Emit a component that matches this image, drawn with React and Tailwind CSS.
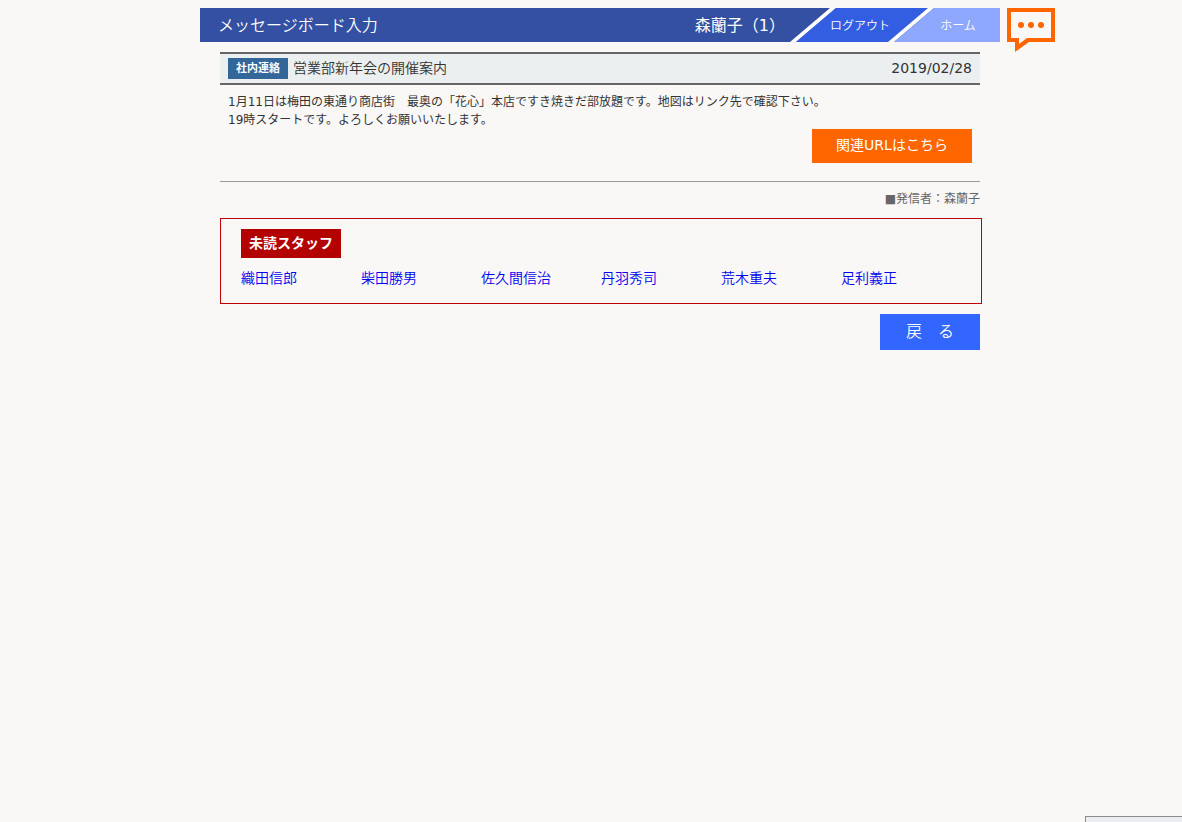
import { useState } from "react";

const unreadStaff = [
  "織田信郎",
  "柴田勝男",
  "佐久間信治",
  "丹羽秀司",
  "荒木重夫",
  "足利義正",
];

function MessageIcon() {
  return (
    <svg viewBox="0 0 48 44" className="block w-12 h-11" aria-hidden="true">
      <path
        d="M0 0H48V34H22L8 44V34H0ZM4 4V30H12V36L20 30H44V4Z"
        fill="#ff6600"
        fillRule="evenodd"
      />
      <circle cx="14" cy="17" r="3" fill="#ff6600" />
      <circle cx="24" cy="17" r="3" fill="#ff6600" />
      <circle cx="34" cy="17" r="3" fill="#ff6600" />
    </svg>
  );
}

function Header({ title, user }) {
  return (
    <header className="flex pt-2 pl-50 pr-[127px]">
      <div className="flex flex-1 h-[34px] bg-[#3350a2] text-white">
        <h1 className="flex-1 pl-[18px] text-base leading-9">{title}</h1>
        <span className="text-base leading-9 pr-[5px] font-normal">{user}</span>
        <nav className="relative flex w-[210px] text-xs leading-9">
          {/* 斜めのタブ背景 */}
          <svg
            viewBox="0 0 210 34"
            className="absolute inset-0 w-full h-full"
            aria-hidden="true"
          >
            <path d="M40 0H46L6 34H0Z" fill="#fff" />
            <path d="M46 0H138L98 34H6Z" fill="#335ee2" />
            <path d="M138 0H144L104 34H98Z" fill="#fff" />
            <path d="M144 0H210V34H104Z" fill="#8fa8ff" />
          </svg>
          <a href="#logout" className="relative pl-10 w-[126px]">
            ログアウト
          </a>
          <a href="#home" className="relative flex-1 text-center">
            ホーム
          </a>
        </nav>
      </div>
      <a href="#messages" aria-label="メッセージ" className="ml-[7px] -mb-[10px]">
        <MessageIcon />
      </a>
    </header>
  );
}

function Message() {
  return (
    <article className="mr-0.5 border-b border-[#999999] pb-[18px]">
      <div className="flex items-center h-[33px] px-2 bg-[#ebefef] border-y-2 border-[#666666]">
        <span className="w-15 h-[21px] mr-[5px] bg-[#336699] text-white text-center text-[11px] leading-[21px] font-bold">
          社内連絡
        </span>
        <h2 className="flex-1 text-sm leading-[18px] pb-0.5">営業部新年会の開催案内</h2>
        <time className="text-sm leading-[18px] pb-0.5 font-normal">2019/02/28</time>
      </div>
      <div className="px-2 pt-2">
        <p className="text-xs leading-[18px] font-normal">
          1月11日は梅田の東通り商店街　最奥の「花心」本店ですき焼きだ部放題です。地図はリンク先で確認下さい。
          <br />
          19時スタートです。よろしくお願いいたします。
        </p>
        <a
          href="#related"
          className="block w-40 h-[34px] ml-auto bg-[#ff6600] text-white text-center text-sm leading-8 font-normal"
        >
          関連URLはこちら
        </a>
      </div>
    </article>
  );
}

function UnreadStaff({ names }) {
  return (
    <section className="mt-2.5 h-[86px] border border-[#c00000] pl-5 pt-2.5">
      <h3 className="w-25 bg-[#b30000] text-white text-center text-sm leading-[29px] font-bold">
        未読スタッフ
      </h3>
      <ul className="flex flex-wrap mt-2.5 text-sm text-[#0000ee]">
        {names.map((name) => (
          <li key={name} className="w-30">
            <a href="#staff">{name}</a>
          </li>
        ))}
      </ul>
    </section>
  );
}

export default function App() {
  const [names] = useState(unreadStaff);

  return (
    <div className="min-h-screen bg-[#faf8f7] text-[#333333] font-[350] font-['DejaVu_Sans','Noto_Sans_CJK_JP',sans-serif]">
      <Header title="メッセージボード入力" user="森蘭子（1）" />
      <main className="pl-55 pr-50 pt-2.5">
        <Message />
        <p className="mr-0.5 mt-2 text-right text-xs leading-[18px] text-[#666666] font-normal">
          ■発信者：森蘭子
        </p>
        <UnreadStaff names={names} />
        <button
          type="button"
          className="block w-25 h-9 mt-2.5 ml-auto mr-0.5 bg-[#3366ff] text-white text-base"
        >
          戻　る
        </button>
      </main>
      {/* 画面右下のステータス枠 */}
      <div className="fixed right-0 bottom-0 w-[97px] h-1.5 border-t border-l border-[#8c8c8c] bg-[#ebedf0]" />
    </div>
  );
}
